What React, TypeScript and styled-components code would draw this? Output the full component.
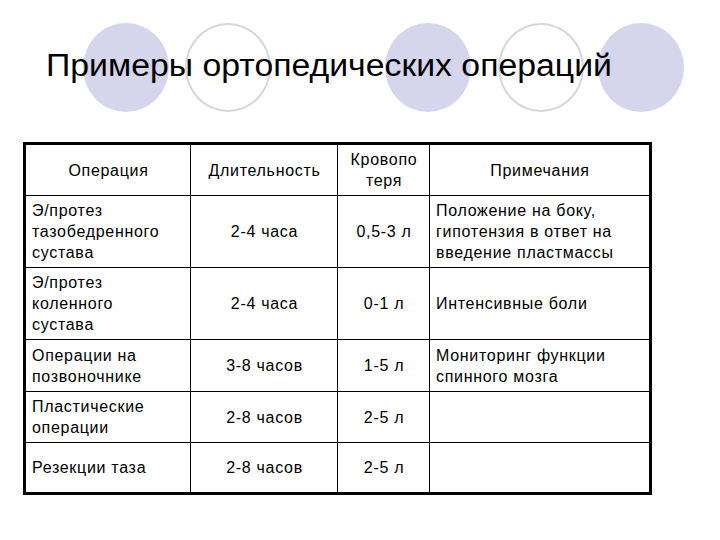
import React from "react";
import styled, { createGlobalStyle } from "styled-components";

const GlobalStyle = createGlobalStyle`
  html, body {
    margin: 0;
    padding: 0;
    background: #ffffff;
  }
  body {
    font-family: "Liberation Sans", Arial, sans-serif;
    color: #000;
  }
`;

const Page = styled.div`
  width: 720px;
  height: 540px;
  display: flex;
  flex-direction: column;
  overflow: hidden;
`;

const Header = styled.div`
  display: grid;
  height: 142px;
  > * {
    grid-area: 1 / 1;
  }
`;

const CircleRow = styled.div`
  display: flex;
  align-items: flex-start;
  padding-top: 23px;
`;

const Circle = styled.div<{ $filled?: boolean; $offset: number }>`
  flex: none;
  width: 86px;
  height: 89px;
  border-radius: 50%;
  box-sizing: border-box;
  margin-left: ${(p) => p.$offset}px;
  background: ${(p) => (p.$filled ? "#d5d5ec" : "transparent")};
  border: ${(p) => (p.$filled ? "none" : "2px solid #d6d6e0")};
`;

const Title = styled.h1`
  margin: 0 0 0 46px;
  padding-top: 48px;
  justify-self: start;
  align-self: start;
  font-family: "Liberation Sans", Arial, sans-serif;
  font-weight: 400;
  font-size: 31px;
  line-height: 36px;
  color: #000;
  white-space: nowrap;
  transform: scaleX(1.09);
  transform-origin: left top;
`;

const Grid = styled.div`
  margin-left: 23px;
  width: 629px;
  box-sizing: border-box;
  border: 3px solid #000;
  background: #000;
  display: grid;
  grid-template-columns: 164px 146px 91px 219px;
  grid-template-rows: 50px 71px 71px 51px 50px 49px;
  gap: 1px;
`;

const Cell = styled.div<{ $align?: "left" | "center" }>`
  background: #fff;
  display: flex;
  align-items: center;
  justify-content: ${(p) => (p.$align === "left" ? "flex-start" : "center")};
  text-align: ${(p) => (p.$align === "left" ? "left" : "center")};
  padding: 0 5px 0 6px;
  font-size: 16px;
  line-height: 21px;
  letter-spacing: 0.7px;
  white-space: nowrap;
  color: #000;
`;

type Row = {
  op: string[];
  time: string;
  loss: string;
  note: string[];
};

const rows: Row[] = [
  {
    op: ["Э/протез", "тазобедренного", "сустава"],
    time: "2-4 часа",
    loss: "0,5-3 л",
    note: ["Положение на боку,", "гипотензия в ответ на", "введение пластмассы"],
  },
  {
    op: ["Э/протез", "коленного", "сустава"],
    time: "2-4 часа",
    loss: "0-1 л",
    note: ["Интенсивные боли"],
  },
  {
    op: ["Операции на", "позвоночнике"],
    time: "3-8 часов",
    loss: "1-5 л",
    note: ["Мониторинг функции", "спинного мозга"],
  },
  {
    op: ["Пластические", "операции"],
    time: "2-8 часов",
    loss: "2-5 л",
    note: [],
  },
  {
    op: ["Резекции таза"],
    time: "2-8 часов",
    loss: "2-5 л",
    note: [],
  },
];

const Lines = ({ items }: { items: string[] }) => (
  <div>
    {items.map((t, i) => (
      <div key={i}>{t}</div>
    ))}
  </div>
);

const App = () => {
  return (
    <>
      <GlobalStyle />
      <Page>
        <Header>
          <CircleRow>
            <Circle $filled $offset={83} />
            <Circle $offset={16} />
            <Circle $filled $offset={114} />
            <Circle $offset={27} />
            <Circle $filled $offset={14} />
          </CircleRow>
          <Title>Примеры ортопедических операций</Title>
        </Header>
        <Grid>
          <Cell>Операция</Cell>
          <Cell>Длительность</Cell>
          <Cell>
            <Lines items={["Кровопо", "теря"]} />
          </Cell>
          <Cell>Примечания</Cell>
          {rows.map((r, idx) => (
            <React.Fragment key={idx}>
              <Cell $align="left">
                <Lines items={r.op} />
              </Cell>
              <Cell>{r.time}</Cell>
              <Cell>{r.loss}</Cell>
              <Cell $align="left">
                <Lines items={r.note} />
              </Cell>
            </React.Fragment>
          ))}
        </Grid>
      </Page>
    </>
  );
};

export default App;
